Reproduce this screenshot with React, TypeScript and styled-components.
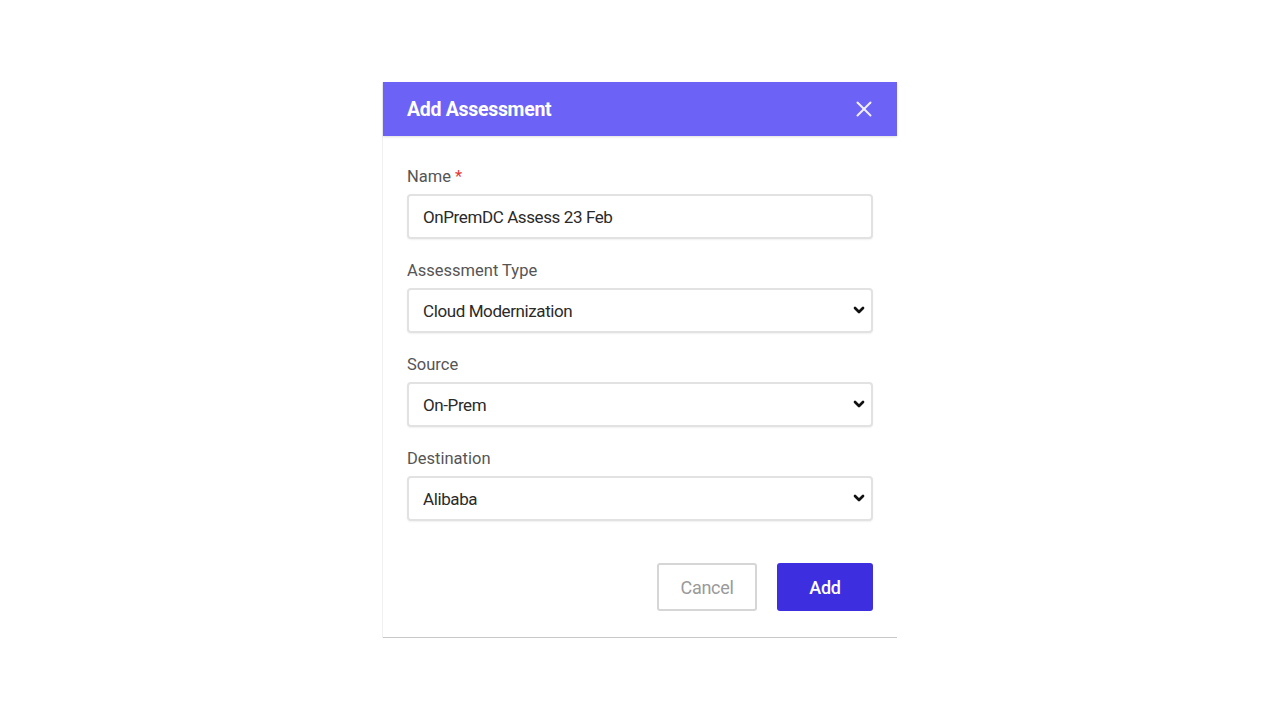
import styled, { createGlobalStyle } from 'styled-components';
import { X, ChevronDown } from 'lucide-react';

const GlobalStyle = createGlobalStyle`
  body {
    margin: 0;
    background: #fff;
    font-family: Roboto, 'Liberation Sans', sans-serif;
  }
`;

const fields = [
  { label: 'Assessment Type', value: 'Cloud Modernization' },
  { label: 'Source', value: 'On-Prem' },
  { label: 'Destination', value: 'Alibaba' },
];

const App = () => {
  return (
    <>
      <GlobalStyle />
      <Page>
        <Modal>
          <Header>
            <Title>Add Assessment</Title>
            <CloseButton type="button">
              <X size={26} strokeWidth={1.8} />
            </CloseButton>
          </Header>
          <Body>
            <Field>
              <Label>
                Name <Required>*</Required>
              </Label>
              <TextInput defaultValue="OnPremDC Assess 23 Feb" />
            </Field>
            {fields.map((f) => (
              <Field key={f.label}>
                <Label>{f.label}</Label>
                <SelectWrap>
                  <Select defaultValue={f.value}>
                    <option>{f.value}</option>
                  </Select>
                  <Chevron>
                    <ChevronDown size={16} strokeWidth={4} />
                  </Chevron>
                </SelectWrap>
              </Field>
            ))}
            <Footer>
              <Button type="button" variant="outline">
                Cancel
              </Button>
              <Button type="button" variant="primary">
                Add
              </Button>
            </Footer>
          </Body>
        </Modal>
      </Page>
    </>
  );
};

const Page = styled.div`
  width: 1280px;
  height: 720px;
  display: flex;
  justify-content: center;
  padding-top: 82px;
  box-sizing: border-box;
`;

const Modal = styled.div`
  width: 514px;
  height: 556px;
  box-sizing: border-box;
  background: #fff;
  border-bottom: 1px solid #c8c8c8;
  box-shadow: -1px 0 0 #f0f0f0;
  display: flex;
  flex-direction: column;
`;

const Header = styled.div`
  height: 54px;
  flex-shrink: 0;
  background: #6c63f6;
  box-shadow: 0 1px 2px rgba(0, 0, 0, 0.12);
  display: flex;
  align-items: center;
  justify-content: space-between;
  padding: 0 20px 0 24px;
`;

const Title = styled.h2`
  margin: 0;
  color: #fff;
  font-size: 19.5px;
  font-weight: 700;
  letter-spacing: -0.3px;
`;

const CloseButton = styled.button`
  background: none;
  border: none;
  padding: 0;
  color: #f2f0ff;
  display: flex;
  cursor: pointer;
`;

const Body = styled.div`
  padding: 31px 24px 0 24px;
  display: flex;
  flex-direction: column;
  gap: 22px;
`;

const Field = styled.div`
  display: flex;
  flex-direction: column;
  gap: 7px;
`;

const Label = styled.label`
  font-size: 16.5px;
  color: #555;
  line-height: 20px;
`;

const Required = styled.span`
  color: #e53935;
`;

const inputBase = `
  width: 466px;
  height: 45px;
  box-sizing: border-box;
  border: 2px solid #e2e2e2;
  border-radius: 4px;
  box-shadow: 0 1px 2px rgba(0, 0, 0, 0.06);
  padding: 0 14px;
  font-family: Roboto, 'Liberation Sans', sans-serif;
  font-size: 17px;
  letter-spacing: -0.4px;
  color: #2a2a2a;
  background: #fff;
  outline: none;
`;

const TextInput = styled.input`
  ${inputBase}
`;

const SelectWrap = styled.div`
  position: relative;
  width: 466px;
`;

const Select = styled.select`
  ${inputBase}
  appearance: none;
`;

const Chevron = styled.span`
  position: absolute;
  right: 6px;
  top: 14px;
  color: #111;
  pointer-events: none;
  display: flex;
`;

const Footer = styled.div`
  display: flex;
  justify-content: flex-end;
  gap: 20px;
  margin-top: 20px;
`;

const Button = styled.button<{ variant: 'outline' | 'primary' }>`
  height: 48px;
  width: ${({ variant }) => (variant === 'outline' ? '100px' : '96px')};
  border-radius: 3px;
  font-family: Roboto, 'Liberation Sans', sans-serif;
  font-size: 18px;
  letter-spacing: -0.3px;
  cursor: pointer;
  border: ${({ variant }) =>
    variant === 'outline' ? '2px solid #d6d6d6' : 'none'};
  background: ${({ variant }) =>
    variant === 'outline' ? '#fff' : '#3d2ee0'};
  color: ${({ variant }) => (variant === 'outline' ? '#9a9a9a' : '#fff')};
  font-weight: ${({ variant }) => (variant === 'outline' ? 400 : 500)};
`;

export default App;
